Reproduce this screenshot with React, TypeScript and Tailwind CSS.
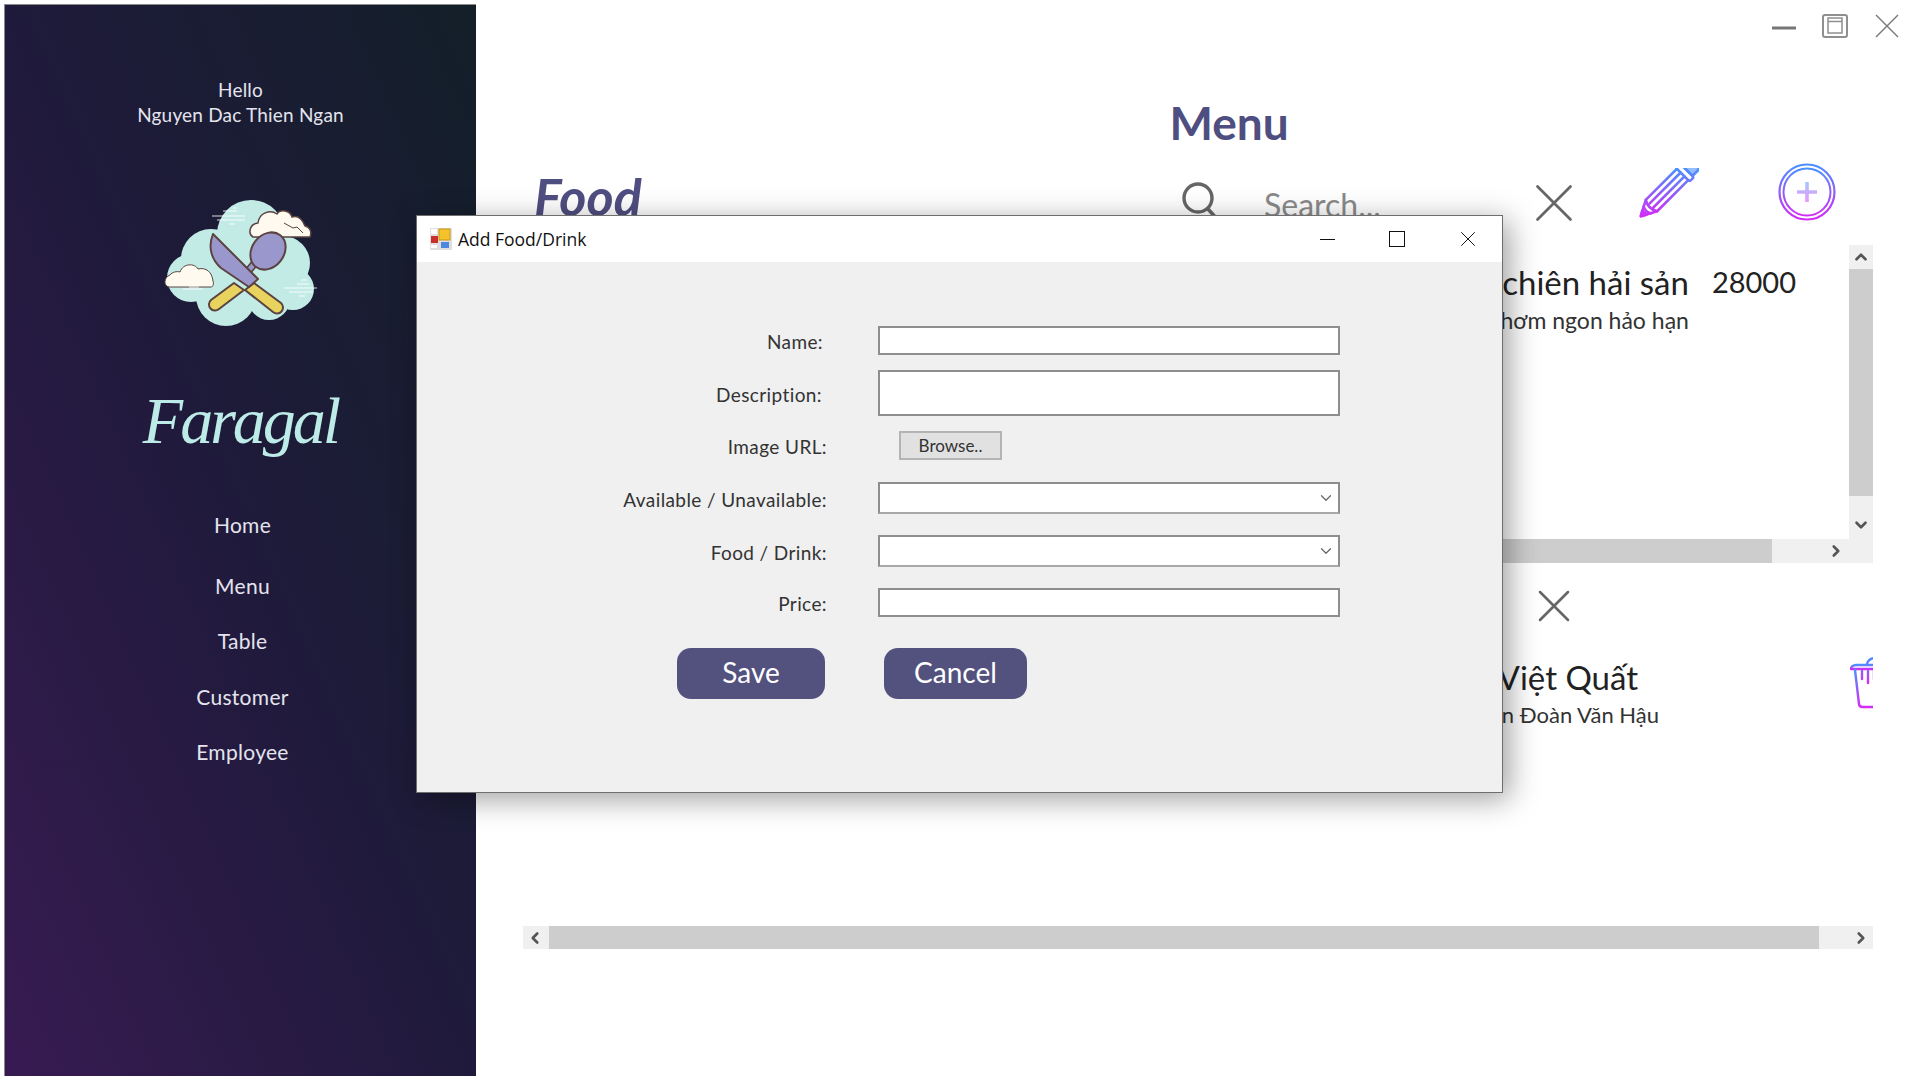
import { ChevronDown, ChevronLeft, ChevronRight, ChevronUp, X } from 'lucide-react'

const navItems = [
  { label: 'Home', className: 'mt-[47px]' },
  { label: 'Menu', className: 'mt-[36px]' },
  { label: 'Table', className: 'mt-[30px]' },
  { label: 'Customer', className: 'mt-[31px]' },
  { label: 'Employee', className: 'mt-[30px]' },
]

function GradientDef({ id }: { id: string }) {
  return (
    <defs>
      <linearGradient id={id} x1="0" y1="0" x2="0" y2="1">
        <stop offset="0" stopColor="#4a90ff" />
        <stop offset="1" stopColor="#d42cf5" />
      </linearGradient>
    </defs>
  )
}

function Logo() {
  const line = '#5a4340'
  return (
    <svg viewBox="0 0 240 170" className="h-[170px] w-[240px] shrink-0">
      {/* big cloud */}
      <g fill="#c3ebe6">
        <circle cx="130" cy="63" r="34" />
        <circle cx="90" cy="88" r="30" />
        <circle cx="70" cy="107" r="24" />
        <circle cx="105" cy="125" r="30" />
        <circle cx="148" cy="128" r="21" />
        <circle cx="172" cy="118" r="21" />
        <circle cx="162" cy="92" r="27" />
        <circle cx="125" cy="100" r="35" />
      </g>
      {/* small clouds */}
      <path
        d="M132 66c-5-3-4-13 5-14 1-10 12-14 19-9 3-5 13-4 15 3 7-2 11 4 13 9 5 1 7 6 5 11z"
        fill="#fffaf0"
        stroke={line}
        strokeWidth="1.5"
        strokeLinejoin="round"
      />
      <path d="M163 52l9 5 4-1 6 6" fill="none" stroke={line} strokeWidth="1" />
      <path
        d="M48 116c-6-1-5-10 1-12 2-3 7-4 10-3 3-9 15-9 18-3 8-2 14 3 15 12 1 3 0 6-2 6z"
        fill="#fffaf0"
        stroke={line}
        strokeWidth="1"
        strokeLinejoin="round"
      />
      {/* spoon */}
      <path d="M113 112L90 129a6 6 0 0 0 8 9l25-19z" fill="#e8d35f" stroke={line} strokeWidth="2" strokeLinejoin="round" />
      <path d="M124 104l9-11" stroke={line} strokeWidth="8" strokeLinecap="round" />
      <path d="M124 104l9-11" stroke="#9a97cc" strokeWidth="4.5" strokeLinecap="round" />
      <ellipse cx="147" cy="80" rx="16" ry="20" transform="rotate(38 147 80)" fill="#9a97cc" stroke={line} strokeWidth="2" />
      {/* knife */}
      <path d="M133 112l27 20a6 6 0 0 1-8 9l-28-22z" fill="#e8d35f" stroke={line} strokeWidth="2" strokeLinejoin="round" />
      <path d="M92 63L137 108 128 116 100 97C92 90 86 78 92 63z" fill="#9a97cc" stroke={line} strokeWidth="2" strokeLinejoin="round" />
      {/* motion lines */}
      <g stroke="#ffffff" strokeWidth="1" opacity="0.85">
        <path d="M91 45h33M96 49h28M102 40h14M108 53h6M112 37h4" />
        <path d="M163 117h33M168 121h24M176 113h12M178 125h6M180 109h6" />
        <path d="M62 118h20M68 116h10" />
      </g>
    </svg>
  )
}

function Sidebar() {
  return (
    <aside className="flex h-[1072px] w-[472px] shrink-0 flex-col items-center border-t border-l border-[#8a8a8a] bg-linear-to-tr from-[#371a52] via-[#1f1a3b] to-[#131f29] pt-[72px] text-[#e4e4ee]">
      <p className="text-center text-[19px] leading-[25px] tracking-[0.2px]">Hello</p>
      <p className="text-center text-[19px] leading-[25px] tracking-[0.2px]">Nguyen Dac Thien Ngan</p>
      <div className="mt-[44px]">
        <Logo />
      </div>
      <p className="mt-[36px] font-['Liberation_Serif',serif] text-[66px] leading-[88px] tracking-[-3px] text-[#bdece8] italic">
        Faragal
      </p>
      {navItems.map((item) => (
        <a key={item.label} className={`pl-1 text-[21px] leading-[25px] tracking-[0.3px] ${item.className}`}>
          {item.label}
        </a>
      ))}
    </aside>
  )
}

function WindowControls() {
  return (
    <div className="flex h-[42px] items-start justify-end pt-[10px] pr-[17px]">
      <svg width="24" height="24" viewBox="0 0 24 24" className="mt-[3px]">
        <path d="M0 11h24" stroke="#777" strokeWidth="3" />
      </svg>
      <svg width="26" height="24" viewBox="0 0 26 24" className="ml-[26px]">
        <rect x="1" y="1" width="24" height="22" rx="2" fill="none" stroke="#8f8f8f" strokeWidth="2" />
        <rect x="6" y="4" width="14" height="15" fill="none" stroke="#8f8f8f" strokeWidth="1.5" />
        <path d="M6 7.5h14" stroke="#8f8f8f" strokeWidth="1.5" />
      </svg>
      <svg width="24" height="24" viewBox="0 0 24 24" className="ml-[27px]">
        <path d="M1 1l22 22M23 1L1 23" stroke="#777" strokeWidth="1.4" />
      </svg>
    </div>
  )
}

function PencilIcon() {
  return (
    <svg width="60" height="54" viewBox="0 0 60 54" fill="none" className="mt-[5px] ml-[69px] shrink-0">
      <defs>
        <linearGradient id="pencil" gradientUnits="userSpaceOnUse" x1="-15" y1="-15" x2="19" y2="19">
          <stop offset="0" stopColor="#4a90ff" />
          <stop offset="1" stopColor="#d42cf5" />
        </linearGradient>
      </defs>
      <g transform="translate(28 22) rotate(45)" stroke="url(#pencil)" strokeWidth="2.6" strokeLinejoin="round" strokeLinecap="round">
        <path d="M-8-22V22L0 37 8 22V-22" />
        <path d="M-2.7-22V22M2.7-22V22" />
        <path d="M-8 22q8 5 16 0" />
        <path d="M-5 28q5 3 10 0" />
        <path d="M-3 32L0 37 3 32z" fill="url(#pencil)" />
        <rect x="-10" y="-28" width="20" height="6" rx="2" />
        <path d="M-8-28V-36q0-2 2-2H6q2 0 2 2V-28z" fill="url(#pencil)" fillOpacity="0.6" />
      </g>
    </svg>
  )
}

function AddIcon() {
  return (
    <svg width="58" height="58" viewBox="0 0 58 58" fill="none" className="ml-[79px] shrink-0">
      <GradientDef id="add" />
      <circle cx="29" cy="29" r="27.5" stroke="url(#add)" strokeWidth="2.2" />
      <circle cx="29" cy="29" r="23.5" stroke="url(#add)" strokeWidth="2" />
      <path d="M29 19v20M19 29h20" stroke="url(#add)" strokeOpacity="0.5" strokeWidth="3.6" />
    </svg>
  )
}

function DrinkIcon() {
  return (
    <svg width="60" height="52" viewBox="0 0 60 52" fill="none" className="shrink-0">
      <GradientDef id="drink" />
      <g stroke="url(#drink)" strokeWidth="2.4" strokeLinecap="round" strokeLinejoin="round">
        <path d="M1 12h40v-4H6c-3 0-5 2-5 4z" />
        <path d="M5 13l4 34c0 2 2 3 4 3h20" />
        <path d="M12 14v8M18 14v12M24 14v8M17 7c1-4 5-6 9-6" />
      </g>
    </svg>
  )
}

function Toolbar() {
  return (
    <div className="mt-[7px] flex h-[82px] items-start pl-[11px]">
      <h2 className="mt-[5px] w-[647px] shrink-0 text-[52px] leading-[56px] font-bold text-[#4f4e80] italic">Food</h2>
      <svg width="44" height="44" viewBox="0 0 44 44" fill="none" className="mt-[18px] shrink-0">
        <circle cx="17" cy="17" r="14" stroke="#666" strokeWidth="3.4" />
        <path d="M27 28l9 10" stroke="#666" strokeWidth="3.6" />
      </svg>
      <input
        placeholder="Search..."
        className="mt-[23px] ml-[39px] w-[273px] shrink-0 bg-transparent text-[32px] leading-[38px] outline-none placeholder:text-[#8a8a8a]"
      />
      <X size={66} strokeWidth={1} color="#666" className="mt-[7px] -mr-[17px] -ml-[16px] shrink-0" />
      <PencilIcon />
      <AddIcon />
    </div>
  )
}

function FoodPanel() {
  return (
    <section className="flex h-[318px] shrink-0 flex-col">
      <div className="flex min-h-0 flex-1">
        <div className="flex flex-1 justify-end overflow-hidden pt-[16px] pr-[53px]">
          <div className="flex flex-col items-end">
            <p className="text-[33px] leading-[42px] whitespace-nowrap text-[#222]">Cơm chiên hải sản</p>
            <p className="mt-[3px] text-[23px] leading-[28px] whitespace-nowrap text-[#333]">Cơm thơm ngon hảo hạn</p>
          </div>
          <p className="ml-[23px] text-[29px] leading-[42px] text-[#222]">28000</p>
        </div>
        <div className="flex w-[24px] shrink-0 flex-col bg-[#f0f0f0]">
          <div className="flex h-[24px] items-center justify-center">
            <ChevronUp size={18} strokeWidth={3.5} color="#555" />
          </div>
          <div className="h-[227px] bg-[#cdcdcd]" />
          <div className="mt-auto mb-[2px] flex h-[24px] items-center justify-center">
            <ChevronDown size={18} strokeWidth={3.5} color="#555" />
          </div>
        </div>
      </div>
      <div className="flex h-[24px] shrink-0 items-center bg-[#f0f0f0]">
        <div className="h-full w-[1249px] bg-[#cdcdcd]" />
        <ChevronRight size={18} strokeWidth={3.5} color="#555" className="ml-[55px]" />
      </div>
    </section>
  )
}

function DrinkPanel() {
  return (
    <section className="min-h-0 flex-1 overflow-hidden">
      <X size={56} strokeWidth={1.1} color="#666" className="mt-[15px] ml-[1003px]" />
      <div className="mt-[21px] flex items-start">
        <div className="w-[1136px] shrink-0 text-right whitespace-nowrap">
          <p className="pr-[21px] text-[33px] leading-[44px] text-[#222]">Trà Việt Quất</p>
          <p className="mt-[2px] text-[22px] leading-[28px] text-[#333]">Nguyễn Đoàn Văn Hậu</p>
        </div>
        <div className="mt-[2px] ml-[191px] shrink-0">
          <DrinkIcon />
        </div>
      </div>
    </section>
  )
}

function FormRow({ label, labelClass, children }: { label: string; labelClass: string; children: React.ReactNode }) {
  return (
    <div className={`flex items-center ${labelClass}`}>
      <label className="w-[410px] shrink-0 pt-[3px] text-right text-[19px] leading-[24px] tracking-[0.4px] whitespace-nowrap text-[#333]">
        {label}
      </label>
      <div className="ml-[51px] w-[462px] shrink-0">{children}</div>
    </div>
  )
}

function ComboBox() {
  return (
    <div className="flex h-[32px] items-center justify-end border-2 border-[#8e8e8e] border-b-[#a8a8a8] bg-white pr-[3px]">
      <ChevronDown size={18} strokeWidth={1.6} color="#666" />
    </div>
  )
}

function TextBox({ className }: { className: string }) {
  return <input className={`block w-full border-2 border-[#8e8e8e] bg-white outline-none ${className}`} />
}

function AddDialog() {
  return (
    <div className="absolute top-[215px] left-[416px] flex h-[578px] w-[1087px] flex-col border border-[#6e6e6e] bg-[#f0f0f0] shadow-[6px_6px_28px_rgba(0,0,0,0.38)]">
      <div className="flex h-[46px] shrink-0 items-center bg-white">
        <svg width="22" height="22" viewBox="0 0 22 22" className="ml-[13px]">
          <rect width="22" height="22" fill="#dfdfdf" />
          <rect x="1" y="8" width="7" height="7" fill="#c9302c" />
          <rect x="9" y="1" width="11" height="11" fill="#f5c22d" stroke="#c99a12" />
          <rect x="11" y="14" width="8" height="6" fill="#4f86e0" />
          <rect x="1" y="1" width="6" height="5" fill="#fff" />
          <rect x="1" y="17" width="6" height="3" fill="#fff" />
        </svg>
        <span className="ml-[6px] font-['Open_Sans',sans-serif] text-[17.5px] text-[#111]">Add Food/Drink</span>
        <div className="ml-auto h-px w-[15px] bg-[#111]" />
        <div className="ml-[54px] h-[16px] w-[16px] border border-[#111]" />
        <X size={26} strokeWidth={0.9} color="#111" className="mr-[21px] ml-[50px]" />
      </div>
      <div className="flex flex-col pt-[64px]">
        <FormRow label="Name:" labelClass="[&>label]:pr-[4px]">
          <TextBox className="h-[29px]" />
        </FormRow>
        <FormRow label="Description:" labelClass="mt-[15px] [&>label]:pr-[5px]">
          <TextBox className="h-[46px]" />
        </FormRow>
        <FormRow label="Image URL:" labelClass="mt-[15px]">
          <button className="ml-[21px] block h-[29px] w-[103px] border-2 border-[#b4b4b4] bg-[#e1e1e1] text-[17px] text-[#333]">
            Browse..
          </button>
        </FormRow>
        <FormRow label="Available / Unavailable:" labelClass="mt-[22px]">
          <ComboBox />
        </FormRow>
        <FormRow label="Food / Drink:" labelClass="mt-[21px]">
          <ComboBox />
        </FormRow>
        <FormRow label="Price:" labelClass="mt-[21px]">
          <TextBox className="h-[29px]" />
        </FormRow>
        <div className="mt-[31px] ml-[260px] flex gap-[59px]">
          <button className="h-[51px] w-[148px] rounded-[14px] bg-[#53527f] pb-[4px] text-[28px] text-white">Save</button>
          <button className="h-[51px] w-[143px] rounded-[14px] bg-[#53527f] pb-[4px] text-[28px] text-white">Cancel</button>
        </div>
      </div>
    </div>
  )
}

export default function App() {
  return (
    <div className="relative flex h-[1080px] w-[1920px] overflow-hidden bg-white p-1 font-['Lato',sans-serif]">
      <Sidebar />
      <main className="flex min-w-0 flex-1 flex-col">
        <WindowControls />
        <h1 className="mt-[44px] pl-[66px] text-center text-[46px] leading-[66px] font-bold text-[#4f4e80]">Menu</h1>
        <div className="ml-[47px] flex w-[1350px] flex-1 flex-col">
          <Toolbar />
          <div className="flex h-[704px] shrink-0 flex-col">
            <FoodPanel />
            <DrinkPanel />
            <div className="flex h-[23px] shrink-0 items-center bg-[#f0f0f0]">
              <ChevronLeft size={18} strokeWidth={3.5} color="#555" className="ml-[3px]" />
              <div className="ml-[5px] h-full w-[1270px] bg-[#cdcdcd]" />
              <ChevronRight size={18} strokeWidth={3.5} color="#555" className="ml-[33px]" />
            </div>
          </div>
        </div>
      </main>
      <AddDialog />
    </div>
  )
}
